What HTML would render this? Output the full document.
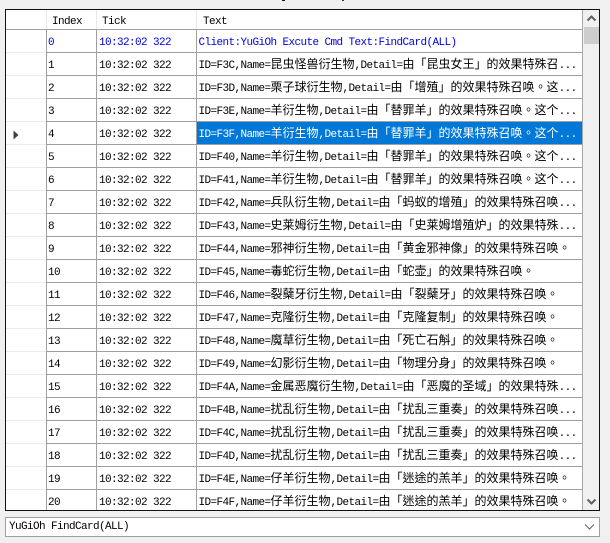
<!DOCTYPE html>
<html><head><meta charset="utf-8">
<style>
html,body{margin:0;padding:0;width:610px;height:543px;overflow:hidden;background:#f0f0f0}
body{position:relative;font-family:"Noto Sans CJK TC","Noto Sans CJK SC",sans-serif;font-size:12px;color:#000}
i{font-style:normal;font-family:"Liberation Mono",monospace;font-size:11px;letter-spacing:-.6px}
#g{position:absolute;left:5px;top:9px;width:593px;height:500px;border:1px solid #111;background:#fff;overflow:hidden}
#hd{position:absolute;left:0;top:0;width:576px;height:19px;border-bottom:1px solid #a0a0a0}
.h{position:absolute;top:3px;line-height:13px}
.s{position:absolute;top:0;width:1px;height:19px;background:#e8e8e8}
.r{position:absolute;left:0;width:576px;height:22px;border-bottom:1px solid #a0a0a0;line-height:22px;white-space:nowrap}
.r b{position:absolute;left:0;top:0;width:40px;height:23px;background:#fff;border-bottom:1px solid #ececec;box-sizing:border-box}
.r span{position:absolute;top:0;height:22px}
.a{left:42px}.t{left:93px}.x{left:192.5px}
.l{position:absolute;top:20px;width:1px;height:481px;background:#a0a0a0}
.u,.u i{color:#0000e0}
.sel{position:absolute;left:191px;top:0;width:385px;height:22px;background:#0078d7}
.sel+span,.sel+span i{color:#fff}
#sb{position:absolute;left:577px;top:0;width:16px;height:500px;background:#f0f0f0}
#th{position:absolute;left:1px;top:17px;width:15px;height:17px;background:#cdcdcd}
#cb{position:absolute;left:5px;top:517px;width:593px;height:18px;border:1px solid #a0a0a0;background:#fff;line-height:18px}
#cb i{position:absolute;left:2px;top:0}
svg{position:absolute}
.m{position:absolute;top:0;width:2px;height:1px}
</style></head><body>
<div class="m" style="left:282px;background:#113;width:3px"></div>
<div class="m" style="left:342px;background:#814"></div>
<div id="g">
<div id="hd">
<div class="s" style="left:40px"></div><div class="s" style="left:90px"></div><div class="s" style="left:190px"></div>
<div class="h" style="left:46px"><i>Index</i></div>
<div class="h" style="left:96px"><i>Tick</i></div>
<div class="h" style="left:197px"><i>Text</i></div>
</div>
<div class="r u" style="top:20px"><b></b><span class="a"><i>0</i></span><span class="t"><i>10:32:02 322</i></span><span class="x"><i>Client:YuGiOh Excute Cmd Text:FindCard(ALL)</i></span></div>
<div class="r" style="top:43px"><b></b><span class="a"><i>1</i></span><span class="t"><i>10:32:02 322</i></span><span class="x"><i>ID=F3C,Name=</i>昆虫怪兽衍生物<i>,Detail=</i>由「昆虫女王」的效果特殊召<i>...</i></span></div>
<div class="r" style="top:66px"><b></b><span class="a"><i>2</i></span><span class="t"><i>10:32:02 322</i></span><span class="x"><i>ID=F3D,Name=</i>栗子球衍生物<i>,Detail=</i>由「增殖」的效果特殊召唤。这<i>...</i></span></div>
<div class="r" style="top:89px"><b></b><span class="a"><i>3</i></span><span class="t"><i>10:32:02 322</i></span><span class="x"><i>ID=F3E,Name=</i>羊衍生物<i>,Detail=</i>由「替罪羊」的效果特殊召唤。这个<i>...</i></span></div>
<div class="r" style="top:112px"><b></b><span class="a"><i>4</i></span><span class="t"><i>10:32:02 322</i></span><div class="sel"></div><span class="x"><i>ID=F3F,Name=</i>羊衍生物<i>,Detail=</i>由「替罪羊」的效果特殊召唤。这个<i>...</i></span></div>
<div class="r" style="top:135px"><b></b><span class="a"><i>5</i></span><span class="t"><i>10:32:02 322</i></span><span class="x"><i>ID=F40,Name=</i>羊衍生物<i>,Detail=</i>由「替罪羊」的效果特殊召唤。这个<i>...</i></span></div>
<div class="r" style="top:158px"><b></b><span class="a"><i>6</i></span><span class="t"><i>10:32:02 322</i></span><span class="x"><i>ID=F41,Name=</i>羊衍生物<i>,Detail=</i>由「替罪羊」的效果特殊召唤。这个<i>...</i></span></div>
<div class="r" style="top:181px"><b></b><span class="a"><i>7</i></span><span class="t"><i>10:32:02 322</i></span><span class="x"><i>ID=F42,Name=</i>兵队衍生物<i>,Detail=</i>由「蚂蚁的增殖」的效果特殊召唤<i>...</i></span></div>
<div class="r" style="top:204px"><b></b><span class="a"><i>8</i></span><span class="t"><i>10:32:02 322</i></span><span class="x"><i>ID=F43,Name=</i>史莱姆衍生物<i>,Detail=</i>由「史莱姆增殖炉」的效果特殊<i>...</i></span></div>
<div class="r" style="top:227px"><b></b><span class="a"><i>9</i></span><span class="t"><i>10:32:02 322</i></span><span class="x"><i>ID=F44,Name=</i>邪神衍生物<i>,Detail=</i>由「黄金邪神像」的效果特殊召唤。</span></div>
<div class="r" style="top:250px"><b></b><span class="a"><i>10</i></span><span class="t"><i>10:32:02 322</i></span><span class="x"><i>ID=F45,Name=</i>毒蛇衍生物<i>,Detail=</i>由「蛇壶」的效果特殊召唤。</span></div>
<div class="r" style="top:273px"><b></b><span class="a"><i>11</i></span><span class="t"><i>10:32:02 322</i></span><span class="x"><i>ID=F46,Name=</i>裂蘖牙衍生物<i>,Detail=</i>由「裂蘖牙」的效果特殊召唤。</span></div>
<div class="r" style="top:296px"><b></b><span class="a"><i>12</i></span><span class="t"><i>10:32:02 322</i></span><span class="x"><i>ID=F47,Name=</i>克隆衍生物<i>,Detail=</i>由「克隆复制」的效果特殊召唤。</span></div>
<div class="r" style="top:319px"><b></b><span class="a"><i>13</i></span><span class="t"><i>10:32:02 322</i></span><span class="x"><i>ID=F48,Name=</i>魔草衍生物<i>,Detail=</i>由「死亡石斛」的效果特殊召唤。</span></div>
<div class="r" style="top:342px"><b></b><span class="a"><i>14</i></span><span class="t"><i>10:32:02 322</i></span><span class="x"><i>ID=F49,Name=</i>幻影衍生物<i>,Detail=</i>由「物理分身」的效果特殊召唤。</span></div>
<div class="r" style="top:365px"><b></b><span class="a"><i>15</i></span><span class="t"><i>10:32:02 322</i></span><span class="x"><i>ID=F4A,Name=</i>金属恶魔衍生物<i>,Detail=</i>由「恶魔的圣域」的效果特殊<i>...</i></span></div>
<div class="r" style="top:388px"><b></b><span class="a"><i>16</i></span><span class="t"><i>10:32:02 322</i></span><span class="x"><i>ID=F4B,Name=</i>扰乱衍生物<i>,Detail=</i>由「扰乱三重奏」的效果特殊召唤<i>...</i></span></div>
<div class="r" style="top:411px"><b></b><span class="a"><i>17</i></span><span class="t"><i>10:32:02 322</i></span><span class="x"><i>ID=F4C,Name=</i>扰乱衍生物<i>,Detail=</i>由「扰乱三重奏」的效果特殊召唤<i>...</i></span></div>
<div class="r" style="top:434px"><b></b><span class="a"><i>18</i></span><span class="t"><i>10:32:02 322</i></span><span class="x"><i>ID=F4D,Name=</i>扰乱衍生物<i>,Detail=</i>由「扰乱三重奏」的效果特殊召唤<i>...</i></span></div>
<div class="r" style="top:457px"><b></b><span class="a"><i>19</i></span><span class="t"><i>10:32:02 322</i></span><span class="x"><i>ID=F4E,Name=</i>仔羊衍生物<i>,Detail=</i>由「迷途的羔羊」的效果特殊召唤。</span></div>
<div class="r" style="top:480px"><b></b><span class="a"><i>20</i></span><span class="t"><i>10:32:02 322</i></span><span class="x"><i>ID=F4F,Name=</i>仔羊衍生物<i>,Detail=</i>由「迷途的羔羊」的效果特殊召唤。</span></div>
<div class="l" style="left:40px"></div><div class="l" style="left:90px"></div><div class="l" style="left:190px"></div><div class="l" style="left:576px;top:0;height:501px;background:#a8a8a8"></div>
<svg style="left:7px;top:120px" width="7" height="10" viewBox="0 0 7 10"><path d="M0.5 0.5L5.5 5L0.5 9.5Z" fill="#404040"/></svg>
<div id="sb"><div id="th"></div>
<svg style="left:3px;top:4px" width="11" height="8" viewBox="0 0 11 8"><path d="M1.5 6.5L5.5 2.5L9.5 6.5" fill="none" stroke="#606060" stroke-width="2"/></svg>
<svg style="left:3px;top:488px" width="11" height="8" viewBox="0 0 11 8"><path d="M1.5 1.5L5.5 5.5L9.5 1.5" fill="none" stroke="#606060" stroke-width="2"/></svg>
</div>
</div>
<div id="cb"><i style="left:3px">YuGiOh FindCard(ALL)</i>
<svg style="left:578px;top:5px" width="11" height="8" viewBox="0 0 11 8"><path d="M1 1.5L5.5 6L10 1.5" fill="none" stroke="#606060" stroke-width="1"/></svg>
</div>
</body></html>
